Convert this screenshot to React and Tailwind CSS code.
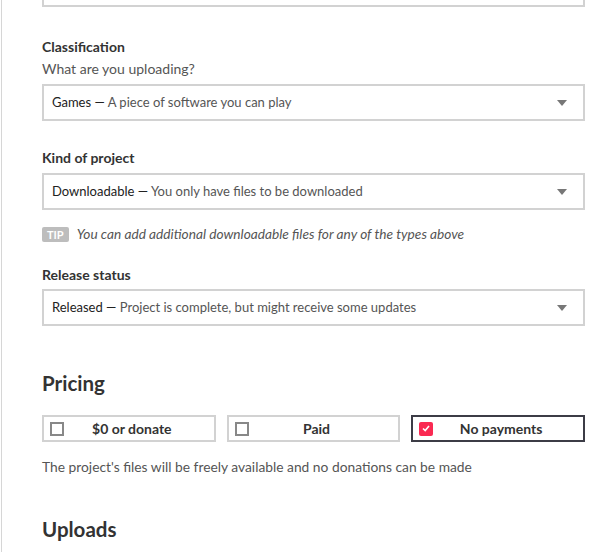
import React from 'react';

const Caret = () => (
  <svg width="10" height="6" viewBox="0 0 10 6" className="shrink-0">
    <path d="M0 0 L10 0 L5 6 Z" fill="#777" />
  </svg>
);

const SelectBox = ({ strong, rest }) => (
  <div className="flex h-[37px] items-center justify-between border-2 border-[#d2d2d2] bg-white pl-[8px] pr-[16px] text-[13px]">
    <span>
      <span className="text-[#222]">{strong} —</span>
      <span className="text-[#555]"> {rest}</span>
    </span>
    <Caret />
  </div>
);

const Label = ({ children, className = '' }) => (
  <div className={`text-[14px] font-bold leading-[20px] text-[#333] ${className}`}>{children}</div>
);

const PriceOption = ({ label, checked }) => (
  <div
    className={`flex h-[27px] flex-1 items-center border-2 pl-[6px] ${
      checked ? 'border-[#3c3c46]' : 'border-[#d2d2d2]'
    }`}
  >
    {checked ? (
      <span className="flex h-[14px] w-[14px] items-center justify-center rounded-[2px] bg-[#fa2a52]">
        <svg width="8" height="7" viewBox="0 0 8 7">
          <path d="M1 3.5 L3.2 5.5 L7 1" fill="none" stroke="white" strokeWidth="1.6" />
        </svg>
      </span>
    ) : (
      <span className="h-[14px] w-[14px] border-2 border-[#888] bg-white" />
    )}
    <span className="flex-1 pr-[14px] text-center text-[14px] font-bold text-[#333]">{label}</span>
  </div>
);

export default function App() {
  return (
    <div className="min-h-[552px] bg-white pl-px" style={{ fontFamily: 'Lato, "Open Sans", sans-serif' }}>
      <div className="min-h-[552px] border-l border-[#d6d6d6] pl-[40px] pr-[17px]">
        <div className="h-[7px] border-2 border-t-0 border-[#d2d2d2]" />

        <Label className="mt-[30px]">Classification</Label>
        <div className="mt-[2px] text-[14px] leading-[20px] text-[#555]">What are you uploading?</div>
        <div className="mt-[5px]">
          <SelectBox strong="Games" rest="A piece of software you can play" />
        </div>

        <Label className="mt-[27px]">Kind of project</Label>
        <div className="mt-[5px]">
          <SelectBox strong="Downloadable" rest="You only have files to be downloaded" />
        </div>
        <div className="mt-[14px] flex items-center gap-[8px]">
          <span className="rounded-[2px] bg-[#bdbdbd] px-[5px] text-[11px] font-bold leading-[15px] text-white">TIP</span>
          <span className="text-[13.7px] italic leading-[20px] text-[#555]">
            You can add additional downloadable files for any of the types above
          </span>
        </div>

        <Label className="mt-[21px]">Release status</Label>
        <div className="mt-[4px]">
          <SelectBox strong="Released" rest="Project is complete, but might receive some updates" />
        </div>

        <div className="mt-[43px] text-[20.5px] font-bold leading-[28px] text-[#333]">Pricing</div>
        <div className="mt-[18px] flex gap-[11px]">
          <PriceOption label="$0 or donate" />
          <PriceOption label="Paid" />
          <PriceOption label="No payments" checked />
        </div>
        <div className="mt-[15px] text-[13.8px] leading-[20px] text-[#555]">
          The project's files will be freely available and no donations can be made
        </div>

        <div className="mt-[38px] text-[20.5px] font-bold leading-[28px] text-[#333]">Uploads</div>
      </div>
    </div>
  );
}
